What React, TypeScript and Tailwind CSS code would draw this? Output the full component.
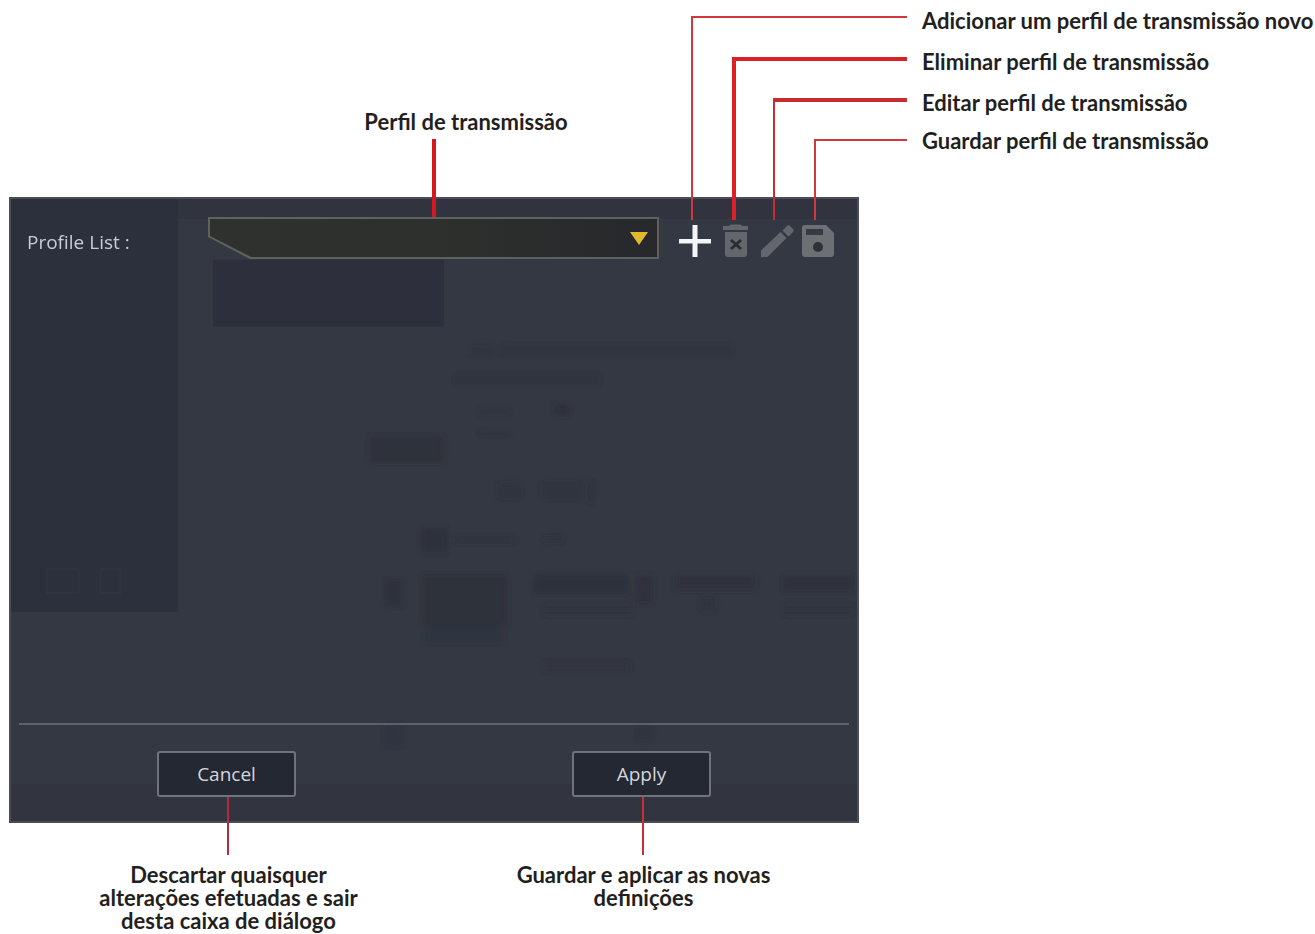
import { useState, type ReactNode } from 'react';

type ToolProps = {
  label: string;
  leader: string;
  children: ReactNode;
};

const callouts = [
  { text: 'Adicionar um perfil de transmissão novo', row: 'h-[41px]' },
  { text: 'Eliminar perfil de transmissão', row: 'h-[41px]' },
  { text: 'Editar perfil de transmissão', row: 'h-[41px]' },
  { text: 'Guardar perfil de transmissão', row: 'h-[35px]' },
];

const PlusIcon = () => (
  <svg viewBox="0 0 36 36" className="w-9 h-9" fill="#f4f5f7">
    <path d="M15.5 2h5v14H34v4.500H20.500V34h-5V20.500H2V16h13.500z" />
  </svg>
);

const TrashIcon = () => (
  <svg viewBox="0 0 36 36" className="w-9 h-9">
    <path
      d="M12.500 1.500h10l1.500 1.500h6v4H5V3h6zM7 9h22v22q0 3-3 3H10q-3 0-3-3z"
      fill="#63676d"
    />
    <path d="m13 17 10 9m0-9-10 9" stroke="#292d35" strokeWidth="3" />
  </svg>
);

const PencilIcon = () => (
  <svg viewBox="0 0 36 36" className="w-9 h-9" fill="#63676d">
    <path d="M2 34v-6.500L21.500 9l6 6L8.500 34zM23.500 7.500l4.500-4.500q1.500-1.500 3 0l3 3q1.500 1.500 0 3l-4.500 4.500z" />
  </svg>
);

const SaveIcon = () => (
  <svg viewBox="0 0 36 36" className="w-9 h-9">
    <path d="M4.500 2H26l8 8v21q0 3-3 3H5q-3 0-3-3V4.500Q2 2 4.500 2z" fill="#6c7074" />
    <path d="M6 6h17v6H6z" fill="#363a42" />
    <circle cx="18" cy="24" r="5" fill="#2e3239" />
  </svg>
);

// Toolbar button with the line that leads up to its callout
const Tool = ({ label, leader, children }: ToolProps) => (
  <div className="relative">
    <button
      type="button"
      aria-label={label}
      className="w-[41px] h-9 flex items-center justify-center"
    >
      {children}
    </button>
    <span
      aria-hidden="true"
      className={`absolute bottom-full mb-[3px] left-[17px] pointer-events-none ${leader}`}
    />
  </div>
);

// Dimmed window that shows through the dialog
const Backdrop = () => (
  <svg
    aria-hidden="true"
    viewBox="0 0 850 625"
    preserveAspectRatio="none"
    className="absolute inset-0 w-full h-full"
  >
    <defs>
      <filter id="soft" x="-10%" y="-10%" width="120%" height="120%">
        <feGaussianBlur stdDeviation="2" />
      </filter>
    </defs>
    <rect width="168" height="415" fill="#2c2f3c" />
    <rect x="168" width="682" height="20" fill="#31343f" />
    <rect x="203" y="61" width="232" height="67" fill="#2d303c" />
    <path d="M0 588h850v37H0z" fill="#32353f" />
    <g filter="url(#soft)" fill="#2d303b">
      <rect x="360" y="239" width="74" height="25" />
      <rect x="414" y="378" width="84" height="50" />
      <rect x="416" y="428" width="78" height="18" opacity=".5" />
      <rect x="376" y="383" width="17" height="26" opacity=".8" />
      <rect x="525" y="378" width="96" height="18" opacity=".8" />
      <rect x="628" y="378" width="16" height="28" opacity=".7" />
      <rect x="668" y="378" width="80" height="15" opacity=".7" />
      <rect x="694" y="400" width="14" height="14" opacity=".6" />
      <rect x="776" y="378" width="70" height="16" opacity=".7" />
      <rect x="535" y="408" width="90" height="10" opacity=".4" />
      <rect x="776" y="408" width="70" height="10" opacity=".4" />
      <rect x="412" y="331" width="26" height="24" opacity=".8" />
      <rect x="446" y="339" width="60" height="6" opacity=".6" />
      <rect x="535" y="339" width="20" height="6" opacity=".4" />
      <rect x="490" y="286" width="22" height="14" opacity=".6" />
      <rect x="534" y="285" width="38" height="16" opacity=".6" />
      <rect x="580" y="284" width="4" height="20" />
      <rect x="462" y="149" width="22" height="8" opacity=".6" />
      <rect x="494" y="147" width="230" height="10" opacity=".6" />
      <rect x="446" y="177" width="145" height="9" opacity=".5" />
      <rect x="470" y="212" width="30" height="4" opacity=".5" />
      <rect x="546" y="207" width="15" height="10" opacity=".8" />
      <rect x="470" y="233" width="30" height="4" opacity=".5" />
      <rect x="536" y="465" width="86" height="10" opacity=".4" />
      <rect x="376" y="529" width="18" height="20" opacity=".5" />
      <rect x="630" y="529" width="14" height="14" opacity=".5" />
    </g>
    <path d="M36 372h32v24H36zM90 372h20v24H90z" fill="none" stroke="#313440" strokeWidth="2" />
  </svg>
);

const ProfileSelect = () => {
  const [profile, setProfile] = useState('');

  return (
    <div className="relative flex-1 min-w-0 h-[42px] p-[2px] bg-[#5e615e] [clip-path:polygon(0_0,100%_0,100%_100%,42px_100%,0_20px)]">
      <select
        id="profile"
        value={profile}
        onChange={(e) => setProfile(e.target.value)}
        className="block appearance-none w-full h-full pl-11 pr-10 outline-none text-[#d4d6de] bg-linear-to-r from-[#2e312e] via-[#2e302d] to-[#26282c] [clip-path:polygon(0_0,100%_0,100%_100%,41px_100%,0_17px)]"
      >
        <option value=""></option>
      </select>
      <svg
        viewBox="0 0 18 13"
        className="absolute right-[11px] top-[15px] w-[18px] h-[13px] pointer-events-none"
      >
        <path d="M0 0h18L9 13z" fill="#dfb92e" />
      </svg>
    </div>
  );
};

const DialogButton = ({ text, line }: { text: string; line: string }) => (
  <div className="relative">
    <button
      type="button"
      className="w-[139px] h-[46px] border-2 border-[#6f737c] rounded-[3px] bg-[#242833] text-[19px] text-[#d3d6dd]"
    >
      {text}
    </button>
    <span
      aria-hidden="true"
      className={`absolute left-1/2 top-full w-[2px] h-[58px] pointer-events-none ${line}`}
    />
  </div>
);

const ProfileDialog = () => (
  <div
    role="dialog"
    aria-label="Profile List"
    className="relative border-2 border-[#4a4d55] bg-[#343842] font-['Open_Sans',sans-serif]"
  >
    <Backdrop />
    <div className="relative flex flex-col">
      <div className="flex items-center pt-[18px] pl-4 pr-[19px]">
        <label htmlFor="profile" className="w-[181px] pt-2 text-[19px] leading-6 text-[#c9ccd6]">
          Profile List :
        </label>
        <ProfileSelect />
        <div className="flex pl-[15px] pt-[6px]">
          <Tool label="Add profile" leader="w-[216px] h-[204px] border-l-2 border-t-2 border-[#d0383c]">
            <PlusIcon />
          </Tool>
          <Tool label="Delete profile" leader="w-[175px] h-[163px] border-l-4 border-t-4 border-[#db2026]">
            <TrashIcon />
          </Tool>
          <Tool label="Edit profile" leader="w-[134px] h-[122px] border-l-2 border-t-4 border-[#cb2b30]">
            <PencilIcon />
          </Tool>
          <Tool label="Save profile" leader="w-[93px] h-[81px] border-l-2 border-t-2 border-[#d0383c]">
            <SaveIcon />
          </Tool>
        </div>
      </div>
      <div className="mx-2 mt-[464px] border-t-2 border-[#5d616b] grid grid-cols-2 justify-items-center pt-[26px] pb-6">
        <DialogButton text="Cancel" line="bg-[#b8293f]" />
        <DialogButton text="Apply" line="bg-[#c93035]" />
      </div>
    </div>
  </div>
);

export default function App() {
  return (
    <main className="min-h-screen bg-white pl-[9px] font-['Lato',sans-serif] font-bold text-[22px] leading-[23px] text-[#231f20]">
      <div className="grid grid-cols-[minmax(0,850fr)_minmax(0,393fr)] gap-x-[63px]">
        <div className="h-[197px] flex items-end justify-center pl-16">
          <div className="flex flex-col items-center">
            <p>Perfil de transmissão</p>
            {/* line down to the profile drop-down */}
            <div className="relative w-full h-[64px]">
              <span
                aria-hidden="true"
                className="absolute z-10 left-[68px] top-[6px] w-1 h-[78px] bg-[#d4191e]"
              />
            </div>
          </div>
        </div>
        <ul className="whitespace-nowrap">
          {callouts.map((c) => (
            <li key={c.text} className={`flex items-center ${c.row}`}>
              {c.text}
            </li>
          ))}
        </ul>

        <div className="font-normal">
          <ProfileDialog />
        </div>

        <div className="col-start-1 grid grid-cols-2 text-center pl-3 pr-2 pt-10">
          <p>
            Descartar quaisquer
            <br />
            alterações efetuadas e sair
            <br />
            desta caixa de diálogo
          </p>
          <p>
            Guardar e aplicar as novas
            <br />
            definições
          </p>
        </div>
      </div>
    </main>
  );
}
